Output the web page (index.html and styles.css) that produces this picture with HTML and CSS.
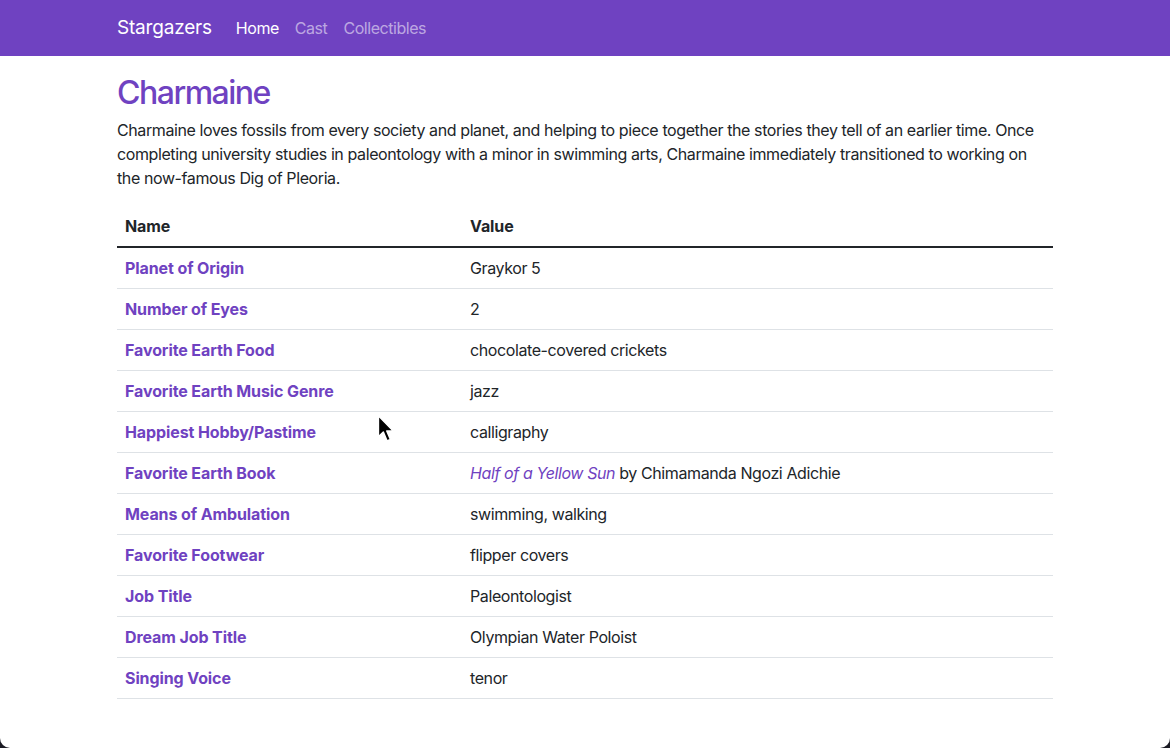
FILE: index.html
```html
<!DOCTYPE html>
<html lang="en">
<head>
<meta charset="utf-8">
<title>Stargazers - Charmaine</title>
<link rel="stylesheet" href="styles.css">
</head>
<body>
<div class="page">
  <nav class="navbar">
    <div class="container nav-inner">
      <a class="brand" href="#">Stargazers</a>
      <ul class="nav-links">
        <li><a class="nav-link active" href="#">Home</a></li>
        <li><a class="nav-link" href="#">Cast</a></li>
        <li><a class="nav-link" href="#">Collectibles</a></li>
      </ul>
    </div>
  </nav>
  <main class="container main">
    <h1 class="title">Charmaine</h1>
    <p class="bio">Charmaine loves fossils from every society and planet, and helping to piece together the stories they tell of an earlier time. Once completing university studies in paleontology with a minor in swimming arts, Charmaine immediately transitioned to working on the now-famous Dig of Pleoria.</p>
    <table class="table">
      <thead>
        <tr><th class="col-name">Name</th><th>Value</th></tr>
      </thead>
      <tbody>
        <tr><td class="name">Planet of Origin</td><td>Graykor 5</td></tr>
        <tr><td class="name">Number of Eyes</td><td>2</td></tr>
        <tr><td class="name">Favorite Earth Food</td><td>chocolate-covered crickets</td></tr>
        <tr><td class="name">Favorite Earth Music Genre</td><td>jazz</td></tr>
        <tr><td class="name">Happiest Hobby/Pastime</td><td>calligraphy</td></tr>
        <tr><td class="name">Favorite Earth Book</td><td><em class="book">Half of a Yellow Sun</em> by Chimamanda Ngozi Adichie</td></tr>
        <tr><td class="name">Means of Ambulation</td><td>swimming, walking</td></tr>
        <tr><td class="name">Favorite Footwear</td><td>flipper covers</td></tr>
        <tr><td class="name">Job Title</td><td>Paleontologist</td></tr>
        <tr><td class="name">Dream Job Title</td><td>Olympian Water Poloist</td></tr>
        <tr><td class="name">Singing Voice</td><td>tenor</td></tr>
      </tbody>
    </table>
  </main>
  <svg class="cursor" width="22" height="32" viewBox="0 0 18 28" aria-hidden="true">
    <path d="M1.5 1.5 L1.5 20 L5.8 15.8 L9 23.5 L12 22.3 L8.8 14.8 L14.5 14.8 Z" fill="#000" stroke="#fff" stroke-width="1.3" stroke-linejoin="round"/>
  </svg>
</div>
</body>
</html>
```
FILE: styles.css
```css
* { box-sizing: border-box; }

html {
  background: #1b1b24;
  margin: 0;
  height: 100%;
}

body {
  margin: 0;
  font-family: Inter, "Noto Sans", "Liberation Sans", sans-serif;
  font-size: 16px;
  line-height: 1.5;
  color: #212529;
  letter-spacing: -0.4px;
}

.page {
  position: relative;
  background: #fff;
  height: 748px;
  border-radius: 0 0 10px 10px;
  overflow: hidden;
}

.container {
  width: 960px;
  margin: 0 auto;
  padding: 0 12px;
}

.navbar {
  background: #6f42c1;
  height: 56px;
}

.nav-inner {
  display: flex;
  align-items: center;
  height: 56px;
}

.brand {
  font-size: 19px;
  color: #fff;
  text-decoration: none;
  margin-right: 16px;
  letter-spacing: -0.2px;
}

.nav-links {
  display: flex;
  list-style: none;
  margin: 0;
  padding: 0;
}

.nav-link {
  display: block;
  padding: 8px;
  color: rgba(255, 255, 255, 0.55);
  text-decoration: none;
  font-size: 16px;
  letter-spacing: -0.45px;
}

.nav-link.active { color: #fff; }

.main { padding-top: 18px; }

.title {
  margin: 0 0 6px;
  font-size: 32px;
  font-weight: 500;
  line-height: 1.2;
  color: #6f42c1;
  letter-spacing: -1.5px;
}

.bio {
  margin: 0 0 16px;
}

.table {
  width: 100%;
  border-collapse: collapse;
}

.table th,
.table td {
  padding: 8px;
  text-align: left;
  vertical-align: top;
  border-bottom: 1px solid #dee2e6;
}

.table th {
  font-weight: 700;
  letter-spacing: -0.1px;
  border-bottom: 2px solid #212529;
}

.col-name { width: 345px; }

.table td.name {
  color: #6f42c1;
  font-weight: 700;
  letter-spacing: -0.1px;
}

.book { color: #6f42c1; }

.cursor {
  position: absolute;
  left: 376px;
  top: 414px;
}
```
